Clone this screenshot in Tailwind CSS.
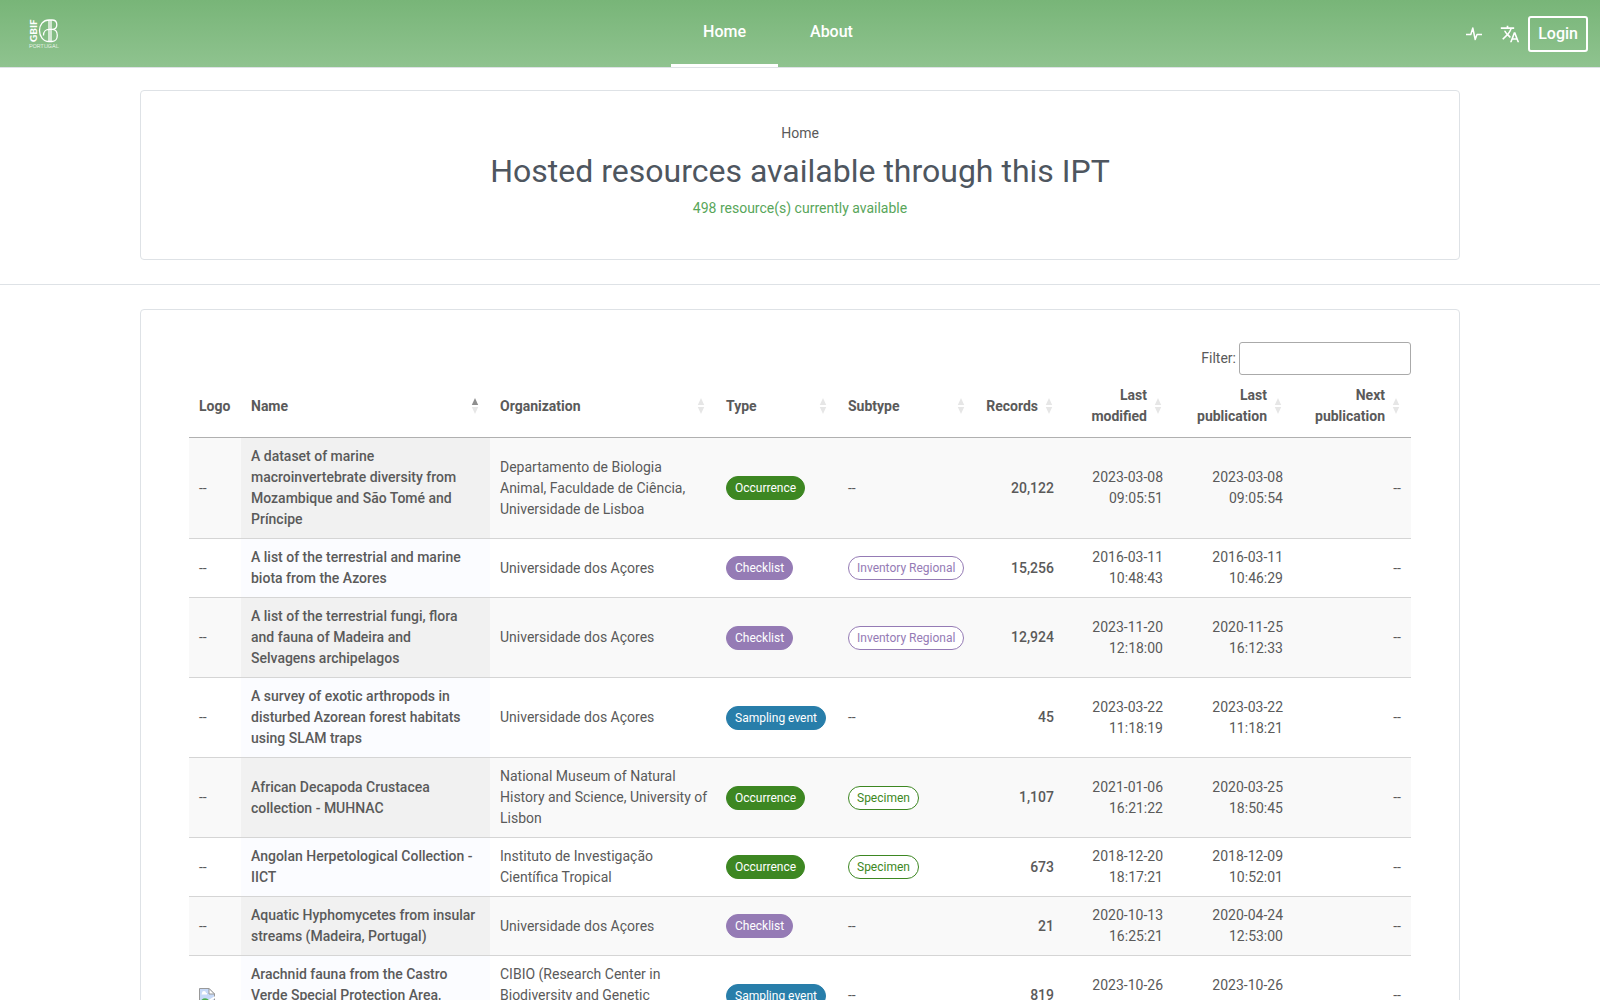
<!DOCTYPE html>
<html lang="en">
<head>
<meta charset="utf-8">
<title>IPT - Hosted resources</title>
<meta name="viewport" content="width=device-width, initial-scale=1">
<script src="https://cdn.jsdelivr.net/npm/@tailwindcss/browser@4"></script>
</head>
<body class="bg-white font-[Roboto,sans-serif] text-sm leading-[21px] text-[#5a5a5a]">
<svg class="hidden" aria-hidden="true">
  <symbol id="sort" viewBox="0 0 8 16"><path d="M4 0 7.200 7H.8z"/><path d="M.8 9h6.400L4 16z"/></symbol>
  <symbol id="sort-asc" viewBox="0 0 8 16"><path fill="#8e8e8e" d="M4 0 7.200 7H.8z"/><path d="M.8 9h6.400L4 16z"/></symbol>
</svg>

<header class="grid grid-cols-[1fr_auto_1fr] border-b border-[#dee2e6] bg-linear-to-b from-[#78b578] to-[#8fc38f] text-base text-white">
  <a href="#" class="flex items-center pl-7" aria-label="GBIF Portugal">
    <svg class="size-8" viewBox="0 0 32 32" fill="none" stroke="#fff">
      <text transform="translate(9 24) rotate(-90)" font-family="Lato, sans-serif" font-weight="900" font-size="10" fill="#fff" stroke="none">GBIF</text>
      <path stroke-width="1.300" d="M21 2C15 2 11.500 7 11.500 12.500s3.500 11 9.500 11M21 2V23.500M23 2V23.500M21 2h3c3 0 4.800 1.800 4.800 4.700s-1.800 4.700-4.800 4.700h-3c-3 0-5.500 2.200-5.500 6M24 11.400c3.500 0 5.300 2.600 5.300 5.900s-1.800 6.200-5.300 6.200h-3"/>
      <text x="1" y="30" font-family="Roboto, sans-serif" font-weight="300" font-size="6" fill="#fff" stroke="none">PORTUGAL</text>
    </svg>
  </a>
  <nav class="flex h-[67px] pr-11 font-medium">
    <a href="#" class="border-b-3 border-white px-8 pt-5 leading-6">Home</a>
    <a href="#" class="px-8 pt-5 leading-6">About</a>
  </nav>
  <div class="flex items-center justify-end pr-3">
    <a href="#" aria-label="Health" class="mr-[18px]">
      <svg class="size-4" viewBox="0 0 16 16" fill="none" stroke="#fff" stroke-width="1.500" stroke-linejoin="round"><path d="M0 8.500h4.800L6.800 2l2.400 11.500L11 8.500h5"/></svg>
    </a>
    <button type="button" aria-label="Language" class="mr-2">
      <svg class="size-5" viewBox="0 0 24 24" fill="#fff"><path d="M12.870 15.070l-2.540-2.510.03-.03c1.740-1.940 2.980-4.170 3.710-6.530H17V4h-7V2H8v2H1v1.990h11.170C11.500 7.920 10.440 9.750 9 11.350 8.070 10.320 7.300 9.190 6.690 8h-2c.73 1.630 1.730 3.170 2.980 4.560l-5.090 5.020L4 19l5-5 3.110 3.110.76-2.040zM18.500 10h-2L12 22h2l1.120-3h4.750L21 22h2l-4.500-12zm-2.620 7l1.620-4.330L19.120 17h-3.240z"/></svg>
    </button>
    <a href="#" class="rounded-[3px] border-2 border-white px-2 py-1 font-medium leading-6">Login</a>
  </div>
</header>

<section class="border-b border-[#dee2e6] pt-[22px] pb-6">
  <div class="mx-auto max-w-[1320px] rounded border border-[#dee2e6] px-12 pt-8 pb-10 text-center">
    <div><a href="#">Home</a></div>
    <h1 class="mt-2 text-[32px] leading-[38px] text-[#4e565f]">Hosted resources available through this IPT</h1>
    <p class="mt-2 text-[#58a65a]">498 resource(s) currently available</p>
  </div>
</section>

<main class="mx-auto mt-6 mb-6 max-w-[1320px] rounded border border-[#dee2e6] px-12 py-8">
  <div class="flex items-center justify-end gap-[3px]">
    <label for="filter">Filter:</label>
    <input id="filter" type="search" class="h-[33px] w-[172px] rounded-[3px] border border-[#aaa] px-2 outline-none">
  </div>
  <table class="w-full table-fixed border-collapse">
    <colgroup>
      <col class="w-[52px]"><col class="w-[249px]"><col class="w-[226px]"><col class="w-[122px]"><col class="w-[138px]"><col class="w-[88px]"><col class="w-[109px]"><col class="w-[120px]"><col class="w-[118px]">
    </colgroup>
    <thead>
      <tr id="head" class="border-b border-[#b0b0b0] text-left"></tr>
    </thead>
    <tbody id="rows"></tbody>
  </table>
</main>

<script>
const columns = ['Logo', 'Name', 'Organization', 'Type', 'Subtype', 'Records', 'Last modified', 'Last publication', 'Next publication'];
const datasets = [
  ['A dataset of marine macroinvertebrate diversity from Mozambique and São Tomé and Príncipe', 'Departamento de Biologia Animal, Faculdade de Ciência, Universidade de Lisboa', 'Occurrence', '', '20,122', '2023-03-08 09:05:51', '2023-03-08 09:05:54'],
  ['A list of the terrestrial and marine biota from the Azores', 'Universidade dos Açores', 'Checklist', 'Inventory Regional', '15,256', '2016-03-11 10:48:43', '2016-03-11 10:46:29'],
  ['A list of the terrestrial fungi, flora and fauna of Madeira and Selvagens&nbsp;archipelagos', 'Universidade dos Açores', 'Checklist', 'Inventory Regional', '12,924', '2023-11-20 12:18:00', '2020-11-25 16:12:33'],
  ['A survey of exotic arthropods in disturbed Azorean forest habitats using SLAM traps', 'Universidade dos Açores', 'Sampling event', '', '45', '2023-03-22 11:18:19', '2023-03-22 11:18:21'],
  ['African Decapoda Crustacea collection - MUHNAC', 'National Museum of Natural History and Science, University of Lisbon', 'Occurrence', 'Specimen', '1,107', '2021-01-06 16:21:22', '2020-03-25 18:50:45'],
  ['Angolan Herpetological Collection - IICT', 'Instituto de Investigação Científica Tropical', 'Occurrence', 'Specimen', '673', '2018-12-20 18:17:21', '2018-12-09 10:52:01'],
  ['Aquatic Hyphomycetes from insular streams (Madeira, Portugal)', 'Universidade dos Açores', 'Checklist', '', '21', '2020-10-13 16:25:21', '2020-04-24 12:53:00'],
  ['Arachnid fauna from the Castro Verde Special Protection Area, southern Portugal', 'CIBIO (Research Center in Biodiversity and Genetic Resources) Portugal', 'Sampling event', '', '819', '2023-10-26 10:12:35', '2023-10-26 10:12:38', true]
];
const solid = {
  'Occurrence': 'border-[#3d8722] bg-[#3d8722]',
  'Checklist': 'border-[#957bb5] bg-[#957bb5]',
  'Sampling event': 'border-[#287eaa] bg-[#287eaa]'
};
const outline = {
  'Inventory Regional': 'border-[#957bb5] text-[#957bb5]',
  'Specimen': 'border-[#3d8722] text-[#3d8722]'
};
const badge = 'inline-block rounded-full border px-2 text-xs leading-[22px] whitespace-nowrap align-middle';
const missing = '<svg class="size-4" viewBox="0 0 16 16" role="img" aria-label="Logo"><path fill="#c6d9f7" stroke="#999" d="M.5.500H10l5.500 5.500v9.500H.5z"/><path fill="#fff" stroke="#999" d="M10 .5V6h5.500z"/><path fill="#fff" d="M3 5a2 2 0 0 1 4 0h1v1.500H2.500z"/><path fill="#4caf50" d="M1 15c1-5 7-7 10-1v1z"/><path stroke="#fff" stroke-width="2" d="M5 16 16 9"/></svg>';

document.getElementById('head').innerHTML = columns.map((name, i) => {
  const icon = i ? `<svg class="h-4 w-2 shrink-0 fill-[#e6e6e6]" aria-hidden="true"><use href="#${i === 1 ? 'sort-asc' : 'sort'}"/></svg>` : '';
  const align = i > 4 ? 'justify-end text-right gap-[7px]' : 'justify-between';
  return `<th scope="col" class="py-[10px] pl-[10px] ${i ? 'pr-[11px]' : ''} font-bold"><div class="flex items-center ${align}"><span>${name}</span>${icon}</div></th>`;
}).join('');

document.getElementById('rows').innerHTML = datasets.map(([name, org, type, subtype, records, modified, published, logo], i) => {
  const odd = i % 2 === 0;
  const cell = 'px-[10px] py-2';
  return `<tr class="border-b border-[#d5d5d5] ${odd ? 'bg-[#f9f9f9]' : 'bg-white'}">
    <td class="${cell}">${logo ? missing : '--'}</td>
    <td class="${cell} font-medium ${odd ? 'bg-[#f1f1f1]' : 'bg-[#fbfcff]'}"><a href="#">${name}</a></td>
    <td class="py-2 pl-[10px] pr-[7px]">${org}</td>
    <td class="${cell}"><span class="${badge} text-white ${solid[type]}">${type}</span></td>
    <td class="${cell}">${subtype ? `<span class="${badge} bg-white ${outline[subtype]}">${subtype}</span>` : '--'}</td>
    <td class="${cell} text-right font-medium">${records}</td>
    <td class="${cell} pl-5 text-right">${modified}</td>
    <td class="${cell} pl-5 text-right">${published}</td>
    <td class="${cell} text-right">--</td>
  </tr>`;
}).join('');
</script>
</body>
</html>
